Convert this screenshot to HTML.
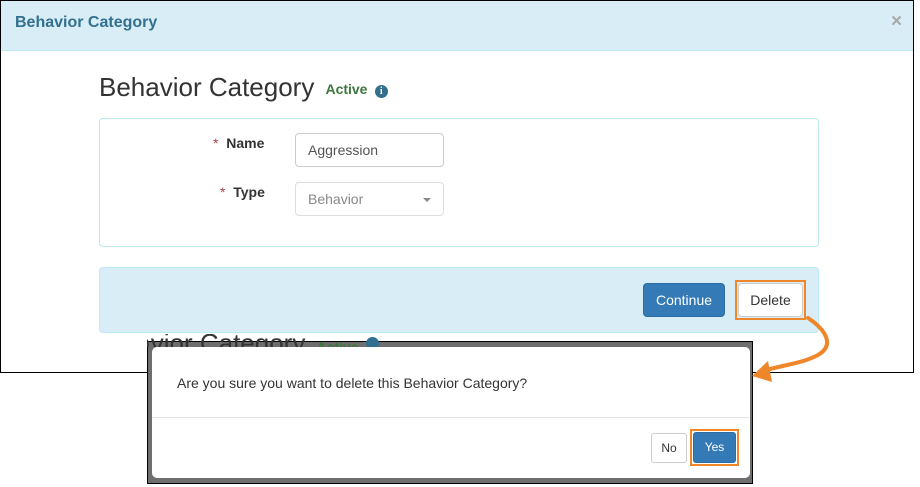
<!DOCTYPE html>
<html><head><style>
*{box-sizing:border-box;margin:0;padding:0}
body{width:920px;height:487px;background:#fff;position:relative;overflow:hidden;font-family:"Liberation Sans",Arial,sans-serif;color:#333}
.abs{position:absolute}
</style></head><body>
<div class="abs" style="left:0;top:0;width:914px;height:373px;border:1px solid #000;background:#fff"></div>
<div class="abs" style="left:1px;top:1px;width:912px;height:50px;background:#d9edf7;border-bottom:1px solid #bce8f1"></div>
<div class="abs" style="left:15px;top:14px;font-size:16px;font-weight:bold;color:#31708f">Behavior Category</div>
<div class="abs" style="left:891px;top:11px;font-size:19px;font-weight:bold;color:#aaa">×</div>
<div class="abs" style="left:99px;top:72px;font-size:26px;color:#333;white-space:nowrap">Behavior Category <span style="font-size:14px;font-weight:bold;color:#3c763d;vertical-align:2px">&nbsp;Active</span> <span style="display:inline-block;width:13px;height:13px;border-radius:50%;background:#31708f;color:#fff;font-size:10px;font-weight:bold;text-align:center;line-height:13px;vertical-align:2px;font-family:'Liberation Serif',serif">i</span></div>
<div class="abs" style="left:99px;top:118px;width:720px;height:129px;border:1px solid #bce8f1;border-radius:4px"></div>
<div class="abs" style="left:213px;top:135px;font-size:14px;font-weight:bold"><span style="color:#a94442;font-weight:normal">*</span>&nbsp; Name</div>
<div class="abs" style="left:220px;top:184px;font-size:14px;font-weight:bold"><span style="color:#a94442;font-weight:normal">*</span>&nbsp; Type</div>
<div class="abs" style="left:295px;top:133px;width:149px;height:34px;border:1px solid #ccc;border-radius:4px;font-size:14px;padding:8px 12px;color:#555">Aggression</div>
<div class="abs" style="left:295px;top:182px;width:149px;height:34px;border:1px solid #ddd;border-radius:4px;font-size:14px;padding:8px 12px;color:#888">Behavior<span style="position:absolute;right:12px;top:15px;border-left:4px solid transparent;border-right:4px solid transparent;border-top:4px solid #888"></span></div>
<div class="abs" style="left:99px;top:267px;width:720px;height:66px;background:#d9edf7;border:1px solid #bce8f1;border-radius:4px"></div>
<div class="abs" style="left:643px;top:283px;width:82px;height:34px;background:#337ab7;border:1px solid #2e6da4;border-radius:4px;color:#fff;font-size:14px;text-align:center;line-height:32px">Continue</div>
<div class="abs" style="left:735px;top:280px;width:71px;height:40px;border:2px solid #f0862a"></div>
<div class="abs" style="left:738px;top:283px;width:65px;height:34px;background:#fff;border:1px solid #ccc;border-radius:4px;font-size:14px;text-align:center;line-height:32px">Delete</div>
<div class="abs" style="left:147px;top:341px;width:606px;height:143px;border:1px solid #000;background:#6e6e6e"></div>
<div class="abs" style="left:147px;top:334px;width:260px;height:13px;overflow:hidden;z-index:2"><div style="position:absolute;left:-57px;top:-6px;font-size:26px;white-space:nowrap;color:#333">Behavior Category <span style="font-size:14px;font-weight:bold;color:#3c763d">&nbsp;Active</span> <span style="display:inline-block;width:13px;height:13px;border-radius:50%;background:#31708f;vertical-align:2px"></span></div></div>
<div class="abs" style="left:152px;top:347px;width:598px;height:131px;background:#fff;border-radius:5px;z-index:3"></div>
<div class="abs" style="left:177px;top:375px;font-size:14px;color:#333;z-index:4">Are you sure you want to delete this Behavior Category?</div>
<div class="abs" style="left:152px;top:417px;width:598px;height:1px;background:#e5e5e5;z-index:4"></div>
<div class="abs" style="left:651px;top:433px;width:36px;height:30px;border:1px solid #ccc;border-radius:3px;font-size:12px;text-align:center;line-height:28px;z-index:4;background:#fff">No</div>
<div class="abs" style="left:690px;top:429px;width:49px;height:37px;border:2px solid #f0862a;z-index:4"></div>
<div class="abs" style="left:693px;top:432px;width:43px;height:31px;background:#337ab7;border:1px solid #2e6da4;border-radius:3px;color:#fff;font-size:12px;text-align:center;line-height:29px;z-index:4">Yes</div>
<svg class="abs" style="left:0;top:0;z-index:5" width="920" height="487">
<path d="M808 318 C 826 330, 835 345, 818 355 C 805 362, 790 364, 770 369" fill="none" stroke="#f0862a" stroke-width="4" stroke-linecap="round"/>
<polygon points="752,376 768,361 772,382" fill="#f0862a"/>
</svg>
</body></html>
